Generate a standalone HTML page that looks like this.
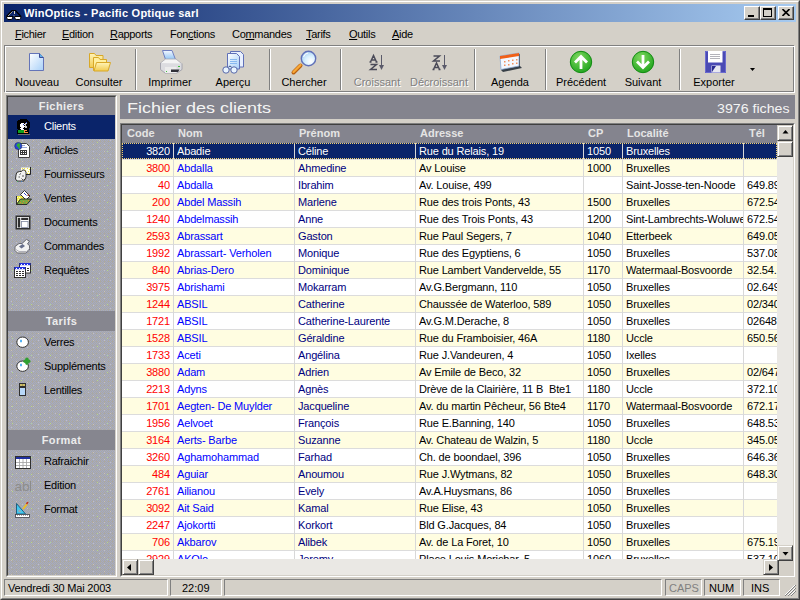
<!DOCTYPE html>
<html><head><meta charset="utf-8">
<style>
*{margin:0;padding:0;box-sizing:border-box}
html,body{width:800px;height:600px;overflow:hidden;background:#D4D0C8;font-family:"Liberation Sans",sans-serif;font-size:11px;color:#000}
.a{position:absolute}
.t{position:absolute;white-space:nowrap;line-height:13px}
/* window frame */
#frame{left:0;top:0;width:800px;height:600px;border-top:1px solid #D4D0C8;border-left:1px solid #D4D0C8;border-right:1px solid #404040;border-bottom:1px solid #404040}
#frame2{left:1px;top:1px;width:798px;height:598px;border-top:1px solid #FFF;border-left:1px solid #FFF;border-right:1px solid #808080;border-bottom:1px solid #808080}
#title{left:4px;top:4px;width:792px;height:18px;background:linear-gradient(to right,#0A246A,#A6CAF0)}
.tbtn{position:absolute;top:6px;width:16px;height:14px;background:#D4D0C8;border-top:1px solid #FFF;border-left:1px solid #FFF;border-right:1px solid #404040;border-bottom:1px solid #404040;box-shadow:inset -1px -1px 0 #808080}
.menu{position:absolute;top:28px;line-height:13px;white-space:nowrap;letter-spacing:-0.3px}
.u{text-decoration:underline}
/* etched */
#tb1{left:4px;top:45px;width:790px;height:47px;border:1px solid #808080}
#tb2{left:5px;top:46px;width:790px;height:47px;border:1px solid #FFF}
.sep{position:absolute;top:49px;width:2px;height:41px;border-left:1px solid #808080;border-right:1px solid #FFF}
.tl{position:absolute;top:76px;line-height:13px;white-space:nowrap;text-align:center;width:80px}
.dis{color:#808080;text-shadow:1px 1px 0 #FFF}
/* sidebar */
#side{left:6px;top:95px;width:111px;height:482px;border-top:1px solid #808080;border-left:1px solid #808080;border-right:1px solid #FFF;border-bottom:1px solid #FFF}
#sidein{left:7px;top:96px;width:109px;height:480px;border-top:1px solid #404040;border-left:1px solid #404040;border-right:1px solid #D4D0C8;border-bottom:1px solid #D4D0C8;background:#A6A9B6}
.sh{position:absolute;left:8px;width:107px;background:#86868F;color:#ECECEC;font-weight:bold;text-align:center;font-size:11px;letter-spacing:0.4px}
.si{position:absolute;left:44px;line-height:13px;white-space:nowrap;letter-spacing:-0.25px}
.ic{position:absolute;left:16px}
/* main header */
#mh{left:120px;top:95px;width:675px;height:24px;background:#84848E}
/* grid */
#g1{left:120px;top:123px;width:675px;height:454px;border-top:1px solid #808080;border-left:1px solid #808080;border-right:1px solid #FFF;border-bottom:1px solid #FFF}
#g2{left:121px;top:124px;width:673px;height:452px;border-top:1px solid #404040;border-left:1px solid #404040;border-right:1px solid #D4D0C8;border-bottom:1px solid #D4D0C8}
#gc{left:122px;top:125px;width:655px;height:434px;overflow:hidden;background:#FFF}
#gh{position:absolute;left:0;top:0;width:655px;height:18px;background:#84848E}
.gh{position:absolute;top:2px;line-height:13px;color:#E4E4E4;font-weight:bold;white-space:nowrap}
.row{position:absolute;left:0;width:655px;height:16px}
.c{position:absolute;top:1px;line-height:14px;white-space:nowrap;overflow:hidden;letter-spacing:-0.15px}
.r{text-align:right}
.vl{position:absolute;top:18px;width:1px;height:420px;background:#D8D8D8}
.hl{position:absolute;left:0;width:655px;height:1px;background:#DCDCDC}
.sb{position:absolute;background:#D4D0C8;border-top:1px solid #D4D0C8;border-left:1px solid #D4D0C8;border-right:1px solid #404040;border-bottom:1px solid #404040;box-shadow:inset 1px 1px 0 #FFF,inset -1px -1px 0 #808080}
.trk{position:absolute;background-color:#EAE8E4}
/* status */
.sp{position:absolute;top:579px;height:17px;border-top:1px solid #808080;border-left:1px solid #808080;border-right:1px solid #FFF;border-bottom:1px solid #FFF}
.st{position:absolute;top:582px;line-height:13px;white-space:nowrap}
</style></head><body>
<div id="frame" class="a"></div>
<div id="frame2" class="a"></div>

<!-- title bar -->
<div id="title" class="a"></div>
<svg class="a" style="left:4px;top:6px" width="20" height="16" viewBox="0 0 20 16">
 <path d="M2.5 10.5 L8 4.5 H11.5 L17 10.5" fill="none" stroke="#000" stroke-width="1.2"/>
 <path d="M4 10 L8.5 5.5" fill="none" stroke="#C8C0A8" stroke-width="0.8"/>
 <path d="M10.5 5 V8 M10 9.5 L10.5 10.5" fill="none" stroke="#E0D8C0" stroke-width="1"/>
 <path d="M2.5 10.5 H9 L8.3 12.8 L7.2 13.5 H4 L2.8 12.5z M10.5 10.5 H17 L16.6 12.5 L15.4 13.5 H12.2 L11 12.8z" fill="#FFF" stroke="#000" stroke-width="1"/>
</svg>
<div class="t" style="left:24px;top:7px;color:#FFF;font-weight:bold;font-size:11px;letter-spacing:0.25px">WinOptics - Pacific Optique sarl</div>
<div class="tbtn" style="left:744px"><div class="a" style="left:3px;top:8px;width:6px;height:2px;background:#000"></div></div>
<div class="tbtn" style="left:760px"><div class="a" style="left:2px;top:1px;width:9px;height:9px;border:1px solid #000;border-top-width:2px"></div></div>
<div class="tbtn" style="left:778px"><svg class="a" style="left:3px;top:2px" width="8" height="7" viewBox="0 0 8 7"><path d="M0.5 0 L7.5 7 M7.5 0 L0.5 7" stroke="#000" stroke-width="1.6"/></svg></div>

<!-- menu -->
<div class="menu" style="left:15px"><span class="u">F</span>ichier</div>
<div class="menu" style="left:62px"><span class="u">E</span>dition</div>
<div class="menu" style="left:110px"><span class="u">R</span>apports</div>
<div class="menu" style="left:170px">Fon<span class="u">c</span>tions</div>
<div class="menu" style="left:232px">Co<span class="u">m</span>mandes</div>
<div class="menu" style="left:306px"><span class="u">T</span>arifs</div>
<div class="menu" style="left:349px"><span class="u">O</span>utils</div>
<div class="menu" style="left:392px"><span class="u">A</span>ide</div>

<!-- toolbar -->
<div id="tb1" class="a"></div>
<div id="tb2" class="a"></div>
<div class="sep" style="left:135px"></div>
<div class="sep" style="left:269px"></div>
<div class="sep" style="left:340px"></div>
<div class="sep" style="left:474px"></div>
<div class="sep" style="left:545px"></div>
<div class="sep" style="left:679px"></div>

<svg class="a" style="left:0;top:0" width="800" height="95" viewBox="0 0 800 95">
 <defs>
  <linearGradient id="pg" x1="0" y1="0" x2="1" y2="1"><stop offset="0" stop-color="#FFFFFF"/><stop offset="1" stop-color="#A8D0F8"/></linearGradient>
  <linearGradient id="fd" x1="0" y1="0" x2="0" y2="1"><stop offset="0" stop-color="#FFF4B8"/><stop offset="1" stop-color="#F2CC50"/></linearGradient>
  <radialGradient id="gr" cx="0.4" cy="0.3" r="0.8"><stop offset="0" stop-color="#80D860"/><stop offset="1" stop-color="#18A018"/></radialGradient>
  <radialGradient id="ln" cx="0.65" cy="0.7" r="0.75"><stop offset="0" stop-color="#FFFFFF"/><stop offset="0.5" stop-color="#D8F0FF"/><stop offset="1" stop-color="#A8D0F0"/></radialGradient>
  <linearGradient id="pp" x1="0" y1="0" x2="0" y2="1"><stop offset="0" stop-color="#F4F8FF"/><stop offset="1" stop-color="#90C4F4"/></linearGradient>
 </defs>
 <!-- Nouveau: page -->
 <path d="M29.5 53.5 H39.5 L43.5 57.5 V70.5 H29.5 Z" fill="url(#pg)" stroke="#6474B8" stroke-width="1"/>
 <path d="M39.5 53.5 V57.5 H43.5" fill="#60B0E8" stroke="#3C4C98" stroke-width="1"/>
 <!-- Consulter: folders -->
 <path d="M89.5 53.5 h5 l1.5 2 h7 v12 h-13.5z" fill="url(#fd)" stroke="#D8A828" stroke-width="1"/>
 <path d="M93.5 57.5 h5 l1.5 2 h6.5 v3 l-9 0 -1 8 h-3z" fill="#FFF0A0" stroke="#D8A828" stroke-width="1"/>
 <path d="M94 71 l2.5 -8.5 h14 l-2.5 8.5z" fill="url(#fd)" stroke="#D8A828" stroke-width="1"/>
 <!-- Imprimer: printer -->
 <path d="M162.5 50.5 h9.5 l3.5 9 h-10z" fill="url(#pp)" stroke="#7080C0" stroke-width="1"/>
 <path d="M160.5 63 l5 -4 h10.5 l5.5 4.5 l-5 3.5 h-11z" fill="#F4F4F4" stroke="#A8A8B0" stroke-width="0.8"/>
 <path d="M160.5 63 v6.5 l4.5 3.5 h12 l5 -3.5 v-6" fill="#DCDCE0" stroke="#9898A4" stroke-width="0.8"/>
 <path d="M165 67 h11.5 v6 h-11.5z" fill="#ECECEC"/>
 <path d="M171 69.5 h8.5 l-1.5 2.5 h-7z" fill="#303038"/>
 <rect x="178" y="66" width="2" height="1" fill="#40C040"/>
 <rect x="166" y="71" width="1" height="1" fill="#40C040"/>
 <!-- Apercu -->
 <path d="M230.5 51.5 h10 l3 3 v12.5 h-13z" fill="#E8F0FF" stroke="#6070B8" stroke-width="1"/>
 <path d="M227.5 53.5 h9 l3 3 v12.5 h-12z" fill="url(#pg)" stroke="#6070B8" stroke-width="1"/>
 <path d="M230 59.5 h7 M230 61.5 h7 M230 63.5 h7" stroke="#88B8F0" stroke-width="1"/>
 <circle cx="226" cy="70" r="3.2" fill="#E8F4FF" stroke="#5868A8" stroke-width="1"/>
 <circle cx="234" cy="70" r="3.2" fill="#E8F4FF" stroke="#5868A8" stroke-width="1"/>
 <path d="M228.5 67 q1.5 -2 3 0" fill="none" stroke="#3A4A80" stroke-width="1"/>
 <!-- Chercher -->
 <path d="M293.5 72.5 L300.5 65.5" stroke="#B86010" stroke-width="4" stroke-linecap="round"/>
 <path d="M293.5 72 L300.5 65" stroke="#F8A838" stroke-width="2.4" stroke-linecap="round"/>
 <circle cx="308.5" cy="58.5" r="7.2" fill="url(#ln)" stroke="#6070B8" stroke-width="1.4"/>
 <path d="M303.5 57 q1 -3.5 4.5 -4" fill="none" stroke="#FFF" stroke-width="1"/>
 <!-- Croissant -->
 <g fill="none" stroke="#4A4A58" stroke-width="1.5">
  <path d="M370.5 62 L373.5 55.5 L376.5 62 M371.5 60 h4 M369.5 62 h2 M375.5 62 h2"/>
  <path d="M370.5 64.5 h6 l-6 5 h6.5"/>
  <path d="M433.5 56 h6 l-6 5 h6.5"/>
  <path d="M433.5 69.5 L436.5 63 L439.5 69.5 M434.5 67.5 h4 M432.5 69.5 h2 M438.5 69.5 h2"/>
 </g>
 <g stroke="#5A5A6A" stroke-width="1"><path d="M381.5 55 v11"/><path d="M444.5 55 v11"/></g>
 <g fill="#5A5A6A"><path d="M379 65 h5 l-2.5 5z"/><path d="M442 65 h5 l-2.5 5z"/></g>
 <!-- Agenda -->
 <path d="M501 57 l19 -3 v12 l2 2 -19 4 -2 -2z" fill="#384048"/>
 <path d="M500 56 l19 -3 v13 l-18 3.5z" fill="#F4F8FF" stroke="#8CA8D0" stroke-width="0.8"/>
 <path d="M500 56 l19 -3 v3 l-19 3z" fill="#F06018"/>
 <g fill="#F09060"><rect x="504" y="61" width="1.5" height="1.5"/><rect x="508" y="60" width="1.5" height="1.5"/><rect x="512" y="59.5" width="1.5" height="1.5"/><rect x="516" y="59" width="1.5" height="1.5"/><rect x="504" y="64.5" width="1.5" height="1.5"/><rect x="508" y="64" width="1.5" height="1.5"/><rect x="512" y="63" width="1.5" height="1.5"/><rect x="516" y="62.5" width="1.5" height="1.5"/></g>
 <!-- Precedent / Suivant -->
 <circle cx="581" cy="62" r="10.7" fill="url(#gr)" stroke="#108A10" stroke-width="1"/>
 <path d="M581 69 V57 M575 62.5 L581 56.5 L587 62.5" fill="none" stroke="#FFF" stroke-width="2.8"/>
 <circle cx="643" cy="62" r="10.7" fill="url(#gr)" stroke="#108A10" stroke-width="1"/>
 <path d="M643 55 V67 M637 61.5 L643 67.5 L649 61.5" fill="none" stroke="#FFF" stroke-width="2.8"/>
 <!-- Exporter floppy -->
 <path d="M705 51 h21 v22 h-21z" fill="#4A4AB4"/>
 <path d="M705.5 51.5 h20 v21 h-20z" fill="none" stroke="#6A6AD0" stroke-width="1"/>
 <rect x="708" y="51" width="14.5" height="11.5" fill="#FFFFFF"/>
 <path d="M710 54.5 h10 M710 56.5 h10 M710 58.5 h10" stroke="#A0A0A8" stroke-width="0.8"/>
 <path d="M711.5 65.5 h9 v7 h-9z" fill="#E8E8F0"/>
 <path d="M712 66 h4 l-4 6z" fill="#2A2A90"/>
</svg>


<div class="tl" style="left:-3px">Nouveau</div>
<div class="tl" style="left:59px">Consulter</div>
<div class="tl" style="left:130px">Imprimer</div>
<div class="tl" style="left:193px">Aperçu</div>
<div class="tl" style="left:264px">Chercher</div>
<div class="tl dis" style="left:337px">Croissant</div>
<div class="tl dis" style="left:399px">Décroissant</div>
<div class="tl" style="left:470px">Agenda</div>
<div class="tl" style="left:541px">Précédent</div>
<div class="tl" style="left:603px">Suivant</div>
<div class="tl" style="left:674px">Exporter</div>
<svg class="a" style="left:750px;top:68px" width="5" height="3"><path d="M0 0h5l-2.5 3z" fill="#000"/></svg>

<!-- sidebar -->
<div id="side" class="a"></div>
<div id="sidein" class="a"></div>
<svg class="a" style="left:8px;top:97px" width="107" height="478">
<defs>
<pattern id="sbp" width="8" height="8" patternUnits="userSpaceOnUse"><rect width="8" height="8" fill="#AAA8A3"/><g fill="#A4AAC4"><rect x="2" y="0" width="1" height="1"/><rect x="6" y="0" width="1" height="1"/><rect x="1" y="1" width="1" height="1"/><rect x="3" y="1" width="1" height="1"/><rect x="5" y="1" width="1" height="1"/><rect x="7" y="1" width="1" height="1"/><rect x="0" y="2" width="1" height="1"/><rect x="2" y="2" width="1" height="1"/><rect x="4" y="2" width="1" height="1"/><rect x="6" y="2" width="1" height="1"/><rect x="1" y="3" width="1" height="1"/><rect x="3" y="3" width="1" height="1"/><rect x="5" y="3" width="1" height="1"/><rect x="7" y="3" width="1" height="1"/><rect x="2" y="4" width="1" height="1"/><rect x="6" y="4" width="1" height="1"/><rect x="1" y="5" width="1" height="1"/><rect x="3" y="5" width="1" height="1"/><rect x="5" y="5" width="1" height="1"/><rect x="7" y="5" width="1" height="1"/><rect x="0" y="6" width="1" height="1"/><rect x="2" y="6" width="1" height="1"/><rect x="4" y="6" width="1" height="1"/><rect x="6" y="6" width="1" height="1"/><rect x="1" y="7" width="1" height="1"/><rect x="3" y="7" width="1" height="1"/><rect x="5" y="7" width="1" height="1"/><rect x="7" y="7" width="1" height="1"/></g></pattern>
<pattern id="sbw" width="11" height="7" patternUnits="userSpaceOnUse"><rect x="3" y="1" width="1" height="1" fill="#C6C0C0"/><rect x="8" y="5" width="1" height="1" fill="#C6C0C0"/></pattern>
<pattern id="sbg" width="19" height="17" patternUnits="userSpaceOnUse"><rect x="4" y="3" width="1" height="1" fill="#B4D890"/><rect x="13" y="11" width="1" height="1" fill="#B4D890"/></pattern>
</defs>
<rect width="107" height="478" fill="url(#sbp)"/>
<rect width="107" height="478" fill="url(#sbw)"/>
<rect width="107" height="478" fill="url(#sbg)"/>
</svg>
<div class="sh" style="top:97px;height:18px;line-height:18px">Fichiers</div>
<div class="a" style="left:8px;top:115px;width:107px;height:24px;background:#0A246A"></div>
<div class="si" style="top:120px;color:#FFF">Clients</div>
<div class="si" style="top:144px">Articles</div>
<div class="si" style="top:168px">Fournisseurs</div>
<div class="si" style="top:192px">Ventes</div>
<div class="si" style="top:216px">Documents</div>
<div class="si" style="top:240px">Commandes</div>
<div class="si" style="top:264px">Requêtes</div>
<div class="sh" style="top:311px;height:20px;line-height:20px">Tarifs</div>
<div class="si" style="top:336px">Verres</div>
<div class="si" style="top:360px">Suppléments</div>
<div class="si" style="top:384px">Lentilles</div>
<div class="sh" style="top:430px;height:20px;line-height:20px">Format</div>
<div class="si" style="top:455px">Rafraichir</div>
<div class="si" style="top:479px">Edition</div>
<div class="si" style="top:503px">Format</div>

<svg class="a" style="left:0;top:0" width="120" height="530" viewBox="0 0 120 530">
 <!-- Clients -->
 <rect x="18" y="134" width="12" height="1" fill="#6A6A70"/>
 <g fill="#000"><rect x="20" y="119" width="7" height="1"/><rect x="18" y="120" width="10" height="1"/><rect x="17" y="121" width="12" height="1"/><rect x="17" y="122" width="13" height="1"/><rect x="17" y="123" width="13" height="1"/><rect x="17" y="124" width="13" height="1"/><rect x="17" y="125" width="13" height="1"/><rect x="17" y="126" width="13" height="1"/><rect x="17" y="127" width="13" height="1"/><rect x="17" y="128" width="12" height="1"/><rect x="18" y="129" width="11" height="1"/><rect x="17" y="130" width="12" height="1"/><rect x="17" y="131" width="12" height="1"/><rect x="17" y="132" width="12" height="1"/><rect x="17" y="133" width="12" height="1"/></g>
 <g fill="#FFF"><rect x="21" y="123" width="3" height="1"/><rect x="20" y="124" width="5" height="1"/><rect x="20" y="125" width="4" height="1"/><rect x="20" y="126" width="5" height="1"/><rect x="21" y="127" width="3" height="1"/><rect x="20" y="128" width="3" height="1"/><rect x="21" y="129" width="3" height="1"/></g>
 <rect x="25" y="123" width="2" height="5" fill="#C8C8C8"/>
 <rect x="26" y="124" width="1" height="2" fill="#000"/>
 <rect x="23" y="124" width="1" height="1" fill="#2040D0"/>
 <rect x="26" y="122" width="1" height="1" fill="#3050E0"/>
 <rect x="18" y="130" width="6" height="3" fill="#10A020"/>
 <path d="M24 130 h3 v1 h-2 v1 h3 v1 h-4z" fill="#FF9040"/>
 <!-- Articles -->
 <path d="M18.5 143.5 h8 l3 3 v11 h-11z" fill="#FFF" stroke="#404040" stroke-width="1"/>
 <path d="M21 145.5 h4 M21 147.5 h6" stroke="#8090D0" stroke-width="0.8"/>
 <rect x="20" y="150" width="7" height="5" fill="#383838"/>
 <g fill="#FFF"><rect x="21" y="151" width="1" height="1"/><rect x="23" y="151" width="1" height="1"/><rect x="25" y="151" width="1" height="1"/><rect x="21" y="153" width="1" height="1"/><rect x="23" y="153" width="1" height="1"/><rect x="25" y="153" width="1" height="1"/></g>
 <circle cx="18.3" cy="146" r="3.6" fill="#2840E0" stroke="#203060" stroke-width="0.6"/>
 <path d="M17 144 l2 -1 1.5 1.5 -1 2 1 1.5 -1.5 1 -1 -2 -1.5 -1z" fill="#30B030"/>
 <!-- Fournisseurs -->
 <path d="M21 167.5 h9.5 v6.5 h-9.5z" fill="#FFFFE8"/>
 <path d="M30.5 167 v7.5 h-8" fill="none" stroke="#202028" stroke-width="1"/>
 <g fill="#F0E040"><rect x="22" y="168" width="1" height="1"/><rect x="24" y="168" width="1" height="1"/><rect x="27" y="168" width="1" height="1"/><rect x="29" y="169" width="1" height="1"/><rect x="25" y="170" width="1" height="1"/><rect x="28" y="171" width="1" height="1"/><rect x="29" y="173" width="1" height="1"/><rect x="27" y="173" width="1" height="1"/></g>
 <path d="M16 175 q0 -3.5 3.5 -3.5 h2 l1 -1.5 h2 l1.5 2 v5 l-1 2.5 h-1 v1.5 h-7 l-1.5 -2z" fill="#F0F0F0" stroke="#202020" stroke-width="0.9"/>
 <path d="M19.5 174.5 l1.5 -1 M18.5 177 h1.5 M21.5 178.5 l1.5 1.5 M23 175 v2" stroke="#303030" stroke-width="0.8"/>
 <rect x="17" y="181" width="1" height="1" fill="#40A060"/><rect x="21" y="181" width="1" height="1" fill="#4080C0"/>
 <!-- Ventes -->
 <path d="M16.5 196 h8 l2.5 3 h-6 l-4.5 5.5z" fill="#F4F048"/>
 <g fill="#FFFFC8"><rect x="17" y="197" width="1" height="1"/><rect x="19" y="197" width="1" height="1"/><rect x="18" y="199" width="1" height="1"/><rect x="20" y="198" width="1" height="1"/><rect x="17" y="201" width="1" height="1"/></g>
 <path d="M20.5 194.5 l4 -4 l5.5 5.5 l-4 4z" fill="#FFF" stroke="#202020" stroke-width="0.9"/>
 <path d="M24 193 l2.5 2.5" stroke="#3040C0" stroke-width="1"/>
 <rect x="27.5" y="194.5" width="1.5" height="1.5" fill="#A04030"/>
 <path d="M16.5 204.5 h10.5 l4.5 -5.5 h-11 l-4 5.5z" fill="#78A840" stroke="#202020" stroke-width="0.9"/>
 <g fill="#E08030"><rect x="20" y="202" width="1" height="1"/><rect x="23" y="201" width="1" height="1"/><rect x="26" y="202" width="1" height="1"/><rect x="22" y="203" width="1" height="1"/><rect x="28" y="200" width="1" height="1"/></g>
 <path d="M16.5 196 v8.5" stroke="#303030" stroke-width="1"/>
 <!-- Documents -->
 <path d="M16.3 216.3 h13.4 v12.4 h-13.4z" fill="#FFF" stroke="#303030" stroke-width="1.6"/>
 <rect x="17.8" y="217.8" width="2.4" height="9.7" fill="#303030"/>
 <rect x="21.2" y="217.8" width="7" height="2.2" fill="#303030"/>
 <rect x="21.5" y="221.5" width="6.5" height="6" fill="#FFF" stroke="#8088A0" stroke-width="0.8"/>
 <!-- Commandes -->
 <path d="M15 246.5 l4 -3 h3 l4.5 -4 l3 1.5 l-2 3 l2 1.5 v4.5 l-3.5 3 h-8.5 l-2.5 -2.5z" fill="#F2F2F2" stroke="#606068" stroke-width="0.9"/>
 <path d="M16 249.5 l3 2 h7.5 l3 -3" fill="none" stroke="#A0A0A8" stroke-width="0.8"/>
 <path d="M19 246.5 l3.5 -2.5 l2.5 2 l-3.5 2.5z" fill="#68708C"/>
 <path d="M22 243 l4.5 -3.5" stroke="#909098" stroke-width="0.8"/>
 <!-- Requetes -->
 <rect x="19.5" y="263.5" width="11" height="9.5" fill="#FFF" stroke="#303030" stroke-width="1"/>
 <rect x="19.5" y="263" width="11" height="2.2" fill="#2030E0"/><g fill="#FFF"><rect x="21" y="264" width="1" height="1"/><rect x="24" y="264" width="1" height="1"/><rect x="27" y="264" width="1" height="1"/></g><g fill="#303030"><rect x="27" y="268" width="2" height="1"/><rect x="27" y="270" width="2" height="1"/></g>
 <rect x="14.5" y="267.5" width="11" height="10" fill="#FFF" stroke="#303030" stroke-width="1"/>
 <rect x="14.5" y="267" width="11" height="2.2" fill="#2030E0"/><g fill="#FFF"><rect x="16" y="268" width="1" height="1"/><rect x="19" y="268" width="1" height="1"/><rect x="22" y="268" width="1" height="1"/></g>
 <g fill="#303030"><rect x="16" y="271" width="2" height="1"/><rect x="19" y="271" width="2" height="1"/><rect x="22" y="271" width="2" height="1"/><rect x="16" y="273" width="2" height="1"/><rect x="19" y="273" width="2" height="1"/><rect x="22" y="273" width="2" height="1"/><rect x="16" y="275" width="2" height="1"/><rect x="19" y="275" width="2" height="1"/><rect x="22" y="275" width="2" height="1"/></g>
 <!-- Verres -->
 <ellipse cx="22.6" cy="342.2" rx="5.8" ry="5.2" fill="#FFF" stroke="#303030" stroke-width="1"/>
 <path d="M20 340 l2 2 M22 340 l-2 2 M21 339.5 v3" stroke="#40A8F0" stroke-width="0.8"/>
 <!-- Supplements -->
 <ellipse cx="22.6" cy="366.2" rx="5.8" ry="5.2" fill="#FFF" stroke="#303030" stroke-width="1"/>
 <path d="M20 364 l2 2 M22 364 l-2 2 M21 363.5 v3" stroke="#40A8F0" stroke-width="0.8"/>
 <g fill="#30A030"><circle cx="26.9" cy="359.4" r="1.8"/><circle cx="26.9" cy="363.1" r="1.8"/><circle cx="25.1" cy="361.25" r="1.8"/><circle cx="28.7" cy="361.25" r="1.8"/></g>
 <!-- Lentilles -->
 <rect x="19.5" y="387.5" width="6" height="8" fill="#B8D8F8" stroke="#303030" stroke-width="1"/>
 <rect x="19.5" y="383.5" width="6" height="3" fill="#F0E080" stroke="#303030" stroke-width="1"/><path d="M21 384 v2 M22.5 384 v2 M24 384 v2" stroke="#807030" stroke-width="0.6"/>
 <!-- Rafraichir -->
 <rect x="15.5" y="456.5" width="15" height="12" fill="#FFF" stroke="#303030" stroke-width="1"/>
 <rect x="16" y="457" width="14" height="2" fill="#2030A0"/>
 <path d="M16 462.5 h14 M16 465.5 h14 M19.5 459 v9 M23 459 v9 M26.5 459 v9" stroke="#A0A0A0" stroke-width="0.8"/>
 <!-- Edition ab| -->
 <text x="14.5" y="491" font-family="Liberation Sans" font-size="13.5" fill="#8C8C8C">ab</text>
 <path d="M30.5 481 v10.5" stroke="#8C8C8C" stroke-width="1"/>
 <!-- Format -->
 <path d="M16.5 503.5 v10.5 h9z" fill="#40C8F0" stroke="#206080" stroke-width="1"/>
 <path d="M18.5 509 v3 h3z" fill="#A0A8B0"/>
 <rect x="15.5" y="514.5" width="14" height="3" fill="#FFF" stroke="#404048" stroke-width="0.8"/><path d="M17.5 515 v1 M19.5 515 v1 M21.5 515 v1 M23.5 515 v1 M25.5 515 v1 M27.5 515 v1" stroke="#606070" stroke-width="0.6"/>
 <path d="M23 509 l4 -5" stroke="#F0C020" stroke-width="1.8"/>
 <path d="M26.5 504 l1.5 -2" stroke="#C03020" stroke-width="1.5"/>
</svg>


<!-- main header -->
<div id="mh" class="a"></div>
<div class="t" style="left:127px;top:99px;font-size:15px;line-height:17px;color:#F4F4F4;transform:scaleX(1.2);transform-origin:0 0">Fichier des clients</div>
<div class="t" style="left:717px;top:101px;font-size:13px;line-height:15px;color:#F4F4F4;transform:scaleX(1.09);transform-origin:0 0">3976 fiches</div>

<!-- grid -->
<div id="g1" class="a"></div>
<div id="g2" class="a"></div>
<div id="gc" class="a">
 <div id="gh">
  <div class="gh" style="left:5px">Code</div>
  <div class="gh" style="left:56px">Nom</div>
  <div class="gh" style="left:177px">Prénom</div>
  <div class="gh" style="left:298px">Adresse</div>
  <div class="gh" style="left:466px">CP</div>
  <div class="gh" style="left:505px">Localité</div>
  <div class="gh" style="left:627px">Tél</div>
 </div>
<div class="hl" style="top:34px"></div>
<div class="hl" style="top:51px"></div>
<div class="hl" style="top:68px"></div>
<div class="hl" style="top:85px"></div>
<div class="hl" style="top:102px"></div>
<div class="hl" style="top:119px"></div>
<div class="hl" style="top:136px"></div>
<div class="hl" style="top:153px"></div>
<div class="hl" style="top:170px"></div>
<div class="hl" style="top:187px"></div>
<div class="hl" style="top:204px"></div>
<div class="hl" style="top:221px"></div>
<div class="hl" style="top:238px"></div>
<div class="hl" style="top:255px"></div>
<div class="hl" style="top:272px"></div>
<div class="hl" style="top:289px"></div>
<div class="hl" style="top:306px"></div>
<div class="hl" style="top:323px"></div>
<div class="hl" style="top:340px"></div>
<div class="hl" style="top:357px"></div>
<div class="hl" style="top:374px"></div>
<div class="hl" style="top:391px"></div>
<div class="hl" style="top:408px"></div>
<div class="hl" style="top:425px"></div>
<div class="row" style="top:18px;background:#0A246A">
<span class="c r" style="left:0px;width:48px;color:#FFFFFF">3820</span>
<span class="c" style="left:55px;width:117px;color:#FFFFFF">Abadie</span>
<span class="c" style="left:176px;width:117px;color:#FFFFFF">Céline</span>
<span class="c" style="left:297px;width:164px;color:#FFFFFF">Rue du Relais, 19</span>
<span class="c" style="left:465px;width:35px;color:#FFFFFF">1050</span>
<span class="c" style="left:504px;width:117px;color:#FFFFFF">Bruxelles</span>
</div>
<div class="row" style="top:35px;background:#FFFDE1">
<span class="c r" style="left:0px;width:48px;color:#FF0000">3800</span>
<span class="c" style="left:55px;width:117px;color:#0000FF">Abdalla</span>
<span class="c" style="left:176px;width:117px;color:#000080">Ahmedine</span>
<span class="c" style="left:297px;width:164px;color:#000000">Av Louise</span>
<span class="c" style="left:465px;width:35px;color:#000000">1000</span>
<span class="c" style="left:504px;width:117px;color:#000000">Bruxelles</span>
</div>
<div class="row" style="top:52px;background:#FFFFFF">
<span class="c r" style="left:0px;width:48px;color:#FF0000">40</span>
<span class="c" style="left:55px;width:117px;color:#0000FF">Abdalla</span>
<span class="c" style="left:176px;width:117px;color:#000080">Ibrahim</span>
<span class="c" style="left:297px;width:164px;color:#000000">Av. Louise, 499</span>
<span class="c" style="left:504px;width:117px;color:#000000">Saint-Josse-ten-Noode</span>
<span class="c" style="left:625px;width:31px;color:#000000">649.89.33</span>
</div>
<div class="row" style="top:69px;background:#FFFDE1">
<span class="c r" style="left:0px;width:48px;color:#FF0000">200</span>
<span class="c" style="left:55px;width:117px;color:#0000FF">Abdel Massih</span>
<span class="c" style="left:176px;width:117px;color:#000080">Marlene</span>
<span class="c" style="left:297px;width:164px;color:#000000">Rue des trois Ponts, 43</span>
<span class="c" style="left:465px;width:35px;color:#000000">1500</span>
<span class="c" style="left:504px;width:117px;color:#000000">Bruxelles</span>
<span class="c" style="left:625px;width:31px;color:#000000">672.54.71</span>
</div>
<div class="row" style="top:86px;background:#FFFFFF">
<span class="c r" style="left:0px;width:48px;color:#FF0000">1240</span>
<span class="c" style="left:55px;width:117px;color:#0000FF">Abdelmassih</span>
<span class="c" style="left:176px;width:117px;color:#000080">Anne</span>
<span class="c" style="left:297px;width:164px;color:#000000">Rue des Trois Ponts, 43</span>
<span class="c" style="left:465px;width:35px;color:#000000">1200</span>
<span class="c" style="left:504px;width:117px;color:#000000">Sint-Lambrechts-Woluwe</span>
<span class="c" style="left:625px;width:31px;color:#000000">672.54.71</span>
</div>
<div class="row" style="top:103px;background:#FFFDE1">
<span class="c r" style="left:0px;width:48px;color:#FF0000">2593</span>
<span class="c" style="left:55px;width:117px;color:#0000FF">Abrassart</span>
<span class="c" style="left:176px;width:117px;color:#000080">Gaston</span>
<span class="c" style="left:297px;width:164px;color:#000000">Rue Paul Segers, 7</span>
<span class="c" style="left:465px;width:35px;color:#000000">1040</span>
<span class="c" style="left:504px;width:117px;color:#000000">Etterbeek</span>
<span class="c" style="left:625px;width:31px;color:#000000">649.05.21</span>
</div>
<div class="row" style="top:120px;background:#FFFFFF">
<span class="c r" style="left:0px;width:48px;color:#FF0000">1992</span>
<span class="c" style="left:55px;width:117px;color:#0000FF">Abrassart- Verholen</span>
<span class="c" style="left:176px;width:117px;color:#000080">Monique</span>
<span class="c" style="left:297px;width:164px;color:#000000">Rue des Egyptiens, 6</span>
<span class="c" style="left:465px;width:35px;color:#000000">1050</span>
<span class="c" style="left:504px;width:117px;color:#000000">Bruxelles</span>
<span class="c" style="left:625px;width:31px;color:#000000">537.08.12</span>
</div>
<div class="row" style="top:137px;background:#FFFDE1">
<span class="c r" style="left:0px;width:48px;color:#FF0000">840</span>
<span class="c" style="left:55px;width:117px;color:#0000FF">Abrias-Dero</span>
<span class="c" style="left:176px;width:117px;color:#000080">Dominique</span>
<span class="c" style="left:297px;width:164px;color:#000000">Rue Lambert Vandervelde, 55</span>
<span class="c" style="left:465px;width:35px;color:#000000">1170</span>
<span class="c" style="left:504px;width:117px;color:#000000">Watermaal-Bosvoorde</span>
<span class="c" style="left:625px;width:31px;color:#000000">32.54.12</span>
</div>
<div class="row" style="top:154px;background:#FFFFFF">
<span class="c r" style="left:0px;width:48px;color:#FF0000">3975</span>
<span class="c" style="left:55px;width:117px;color:#0000FF">Abrishami</span>
<span class="c" style="left:176px;width:117px;color:#000080">Mokarram</span>
<span class="c" style="left:297px;width:164px;color:#000000">Av.G.Bergmann, 110</span>
<span class="c" style="left:465px;width:35px;color:#000000">1050</span>
<span class="c" style="left:504px;width:117px;color:#000000">Bruxelles</span>
<span class="c" style="left:625px;width:31px;color:#000000">02.649.55</span>
</div>
<div class="row" style="top:171px;background:#FFFDE1">
<span class="c r" style="left:0px;width:48px;color:#FF0000">1244</span>
<span class="c" style="left:55px;width:117px;color:#0000FF">ABSIL</span>
<span class="c" style="left:176px;width:117px;color:#000080">Catherine</span>
<span class="c" style="left:297px;width:164px;color:#000000">Chaussée de Waterloo, 589</span>
<span class="c" style="left:465px;width:35px;color:#000000">1050</span>
<span class="c" style="left:504px;width:117px;color:#000000">Bruxelles</span>
<span class="c" style="left:625px;width:31px;color:#000000">02/340.11</span>
</div>
<div class="row" style="top:188px;background:#FFFFFF">
<span class="c r" style="left:0px;width:48px;color:#FF0000">1721</span>
<span class="c" style="left:55px;width:117px;color:#0000FF">ABSIL</span>
<span class="c" style="left:176px;width:117px;color:#000080">Catherine-Laurente</span>
<span class="c" style="left:297px;width:164px;color:#000000">Av.G.M.Derache, 8</span>
<span class="c" style="left:465px;width:35px;color:#000000">1050</span>
<span class="c" style="left:504px;width:117px;color:#000000">Bruxelles</span>
<span class="c" style="left:625px;width:31px;color:#000000">02648.10</span>
</div>
<div class="row" style="top:205px;background:#FFFDE1">
<span class="c r" style="left:0px;width:48px;color:#FF0000">1528</span>
<span class="c" style="left:55px;width:117px;color:#0000FF">ABSIL</span>
<span class="c" style="left:176px;width:117px;color:#000080">Géraldine</span>
<span class="c" style="left:297px;width:164px;color:#000000">Rue du Framboisier, 46A</span>
<span class="c" style="left:465px;width:35px;color:#000000">1180</span>
<span class="c" style="left:504px;width:117px;color:#000000">Uccle</span>
<span class="c" style="left:625px;width:31px;color:#000000">650.56.22</span>
</div>
<div class="row" style="top:222px;background:#FFFFFF">
<span class="c r" style="left:0px;width:48px;color:#FF0000">1733</span>
<span class="c" style="left:55px;width:117px;color:#0000FF">Aceti</span>
<span class="c" style="left:176px;width:117px;color:#000080">Angélina</span>
<span class="c" style="left:297px;width:164px;color:#000000">Rue J.Vandeuren, 4</span>
<span class="c" style="left:465px;width:35px;color:#000000">1050</span>
<span class="c" style="left:504px;width:117px;color:#000000">Ixelles</span>
</div>
<div class="row" style="top:239px;background:#FFFDE1">
<span class="c r" style="left:0px;width:48px;color:#FF0000">3880</span>
<span class="c" style="left:55px;width:117px;color:#0000FF">Adam</span>
<span class="c" style="left:176px;width:117px;color:#000080">Adrien</span>
<span class="c" style="left:297px;width:164px;color:#000000">Av Emile de Beco, 32</span>
<span class="c" style="left:465px;width:35px;color:#000000">1050</span>
<span class="c" style="left:504px;width:117px;color:#000000">Bruxelles</span>
<span class="c" style="left:625px;width:31px;color:#000000">02/647.11</span>
</div>
<div class="row" style="top:256px;background:#FFFFFF">
<span class="c r" style="left:0px;width:48px;color:#FF0000">2213</span>
<span class="c" style="left:55px;width:117px;color:#0000FF">Adyns</span>
<span class="c" style="left:176px;width:117px;color:#000080">Agnès</span>
<span class="c" style="left:297px;width:164px;color:#000000">Drève de la Clairière, 11 B&nbsp; Bte1</span>
<span class="c" style="left:465px;width:35px;color:#000000">1180</span>
<span class="c" style="left:504px;width:117px;color:#000000">Uccle</span>
<span class="c" style="left:625px;width:31px;color:#000000">372.10.44</span>
</div>
<div class="row" style="top:273px;background:#FFFDE1">
<span class="c r" style="left:0px;width:48px;color:#FF0000">1701</span>
<span class="c" style="left:55px;width:117px;color:#0000FF">Aegten- De Muylder</span>
<span class="c" style="left:176px;width:117px;color:#000080">Jacqueline</span>
<span class="c" style="left:297px;width:164px;color:#000000">Av. du martin Pêcheur, 56 Bte4</span>
<span class="c" style="left:465px;width:35px;color:#000000">1170</span>
<span class="c" style="left:504px;width:117px;color:#000000">Watermaal-Bosvoorde</span>
<span class="c" style="left:625px;width:31px;color:#000000">672.17.31</span>
</div>
<div class="row" style="top:290px;background:#FFFFFF">
<span class="c r" style="left:0px;width:48px;color:#FF0000">1956</span>
<span class="c" style="left:55px;width:117px;color:#0000FF">Aelvoet</span>
<span class="c" style="left:176px;width:117px;color:#000080">François</span>
<span class="c" style="left:297px;width:164px;color:#000000">Rue E.Banning, 140</span>
<span class="c" style="left:465px;width:35px;color:#000000">1050</span>
<span class="c" style="left:504px;width:117px;color:#000000">Bruxelles</span>
<span class="c" style="left:625px;width:31px;color:#000000">648.53.20</span>
</div>
<div class="row" style="top:307px;background:#FFFDE1">
<span class="c r" style="left:0px;width:48px;color:#FF0000">3164</span>
<span class="c" style="left:55px;width:117px;color:#0000FF">Aerts- Barbe</span>
<span class="c" style="left:176px;width:117px;color:#000080">Suzanne</span>
<span class="c" style="left:297px;width:164px;color:#000000">Av. Chateau de Walzin, 5</span>
<span class="c" style="left:465px;width:35px;color:#000000">1180</span>
<span class="c" style="left:504px;width:117px;color:#000000">Uccle</span>
<span class="c" style="left:625px;width:31px;color:#000000">345.05.64</span>
</div>
<div class="row" style="top:324px;background:#FFFFFF">
<span class="c r" style="left:0px;width:48px;color:#FF0000">3260</span>
<span class="c" style="left:55px;width:117px;color:#0000FF">Aghamohammad</span>
<span class="c" style="left:176px;width:117px;color:#000080">Farhad</span>
<span class="c" style="left:297px;width:164px;color:#000000">Ch. de boondael, 396</span>
<span class="c" style="left:465px;width:35px;color:#000000">1050</span>
<span class="c" style="left:504px;width:117px;color:#000000">Bruxelles</span>
<span class="c" style="left:625px;width:31px;color:#000000">646.36.57</span>
</div>
<div class="row" style="top:341px;background:#FFFDE1">
<span class="c r" style="left:0px;width:48px;color:#FF0000">484</span>
<span class="c" style="left:55px;width:117px;color:#0000FF">Aguiar</span>
<span class="c" style="left:176px;width:117px;color:#000080">Anoumou</span>
<span class="c" style="left:297px;width:164px;color:#000000">Rue J.Wytmans, 82</span>
<span class="c" style="left:465px;width:35px;color:#000000">1050</span>
<span class="c" style="left:504px;width:117px;color:#000000">Bruxelles</span>
<span class="c" style="left:625px;width:31px;color:#000000">648.30.89</span>
</div>
<div class="row" style="top:358px;background:#FFFFFF">
<span class="c r" style="left:0px;width:48px;color:#FF0000">2761</span>
<span class="c" style="left:55px;width:117px;color:#0000FF">Ailianou</span>
<span class="c" style="left:176px;width:117px;color:#000080">Evely</span>
<span class="c" style="left:297px;width:164px;color:#000000">Av.A.Huysmans, 86</span>
<span class="c" style="left:465px;width:35px;color:#000000">1050</span>
<span class="c" style="left:504px;width:117px;color:#000000">Bruxelles</span>
</div>
<div class="row" style="top:375px;background:#FFFDE1">
<span class="c r" style="left:0px;width:48px;color:#FF0000">3092</span>
<span class="c" style="left:55px;width:117px;color:#0000FF">Ait Said</span>
<span class="c" style="left:176px;width:117px;color:#000080">Kamal</span>
<span class="c" style="left:297px;width:164px;color:#000000">Rue Elise, 43</span>
<span class="c" style="left:465px;width:35px;color:#000000">1050</span>
<span class="c" style="left:504px;width:117px;color:#000000">Bruxelles</span>
</div>
<div class="row" style="top:392px;background:#FFFFFF">
<span class="c r" style="left:0px;width:48px;color:#FF0000">2247</span>
<span class="c" style="left:55px;width:117px;color:#0000FF">Ajokortti</span>
<span class="c" style="left:176px;width:117px;color:#000080">Korkort</span>
<span class="c" style="left:297px;width:164px;color:#000000">Bld G.Jacques, 84</span>
<span class="c" style="left:465px;width:35px;color:#000000">1050</span>
<span class="c" style="left:504px;width:117px;color:#000000">Bruxelles</span>
</div>
<div class="row" style="top:409px;background:#FFFDE1">
<span class="c r" style="left:0px;width:48px;color:#FF0000">706</span>
<span class="c" style="left:55px;width:117px;color:#0000FF">Akbarov</span>
<span class="c" style="left:176px;width:117px;color:#000080">Alibek</span>
<span class="c" style="left:297px;width:164px;color:#000000">Av. de La Foret, 10</span>
<span class="c" style="left:465px;width:35px;color:#000000">1050</span>
<span class="c" style="left:504px;width:117px;color:#000000">Bruxelles</span>
<span class="c" style="left:625px;width:31px;color:#000000">675.19.02</span>
</div>
<div class="row" style="top:426px;background:#FFFFFF">
<span class="c r" style="left:0px;width:48px;color:#FF0000">2929</span>
<span class="c" style="left:55px;width:117px;color:#0000FF">AKOlo</span>
<span class="c" style="left:176px;width:117px;color:#000080">Jeremy</span>
<span class="c" style="left:297px;width:164px;color:#000000">Place Louis Morichar, 5</span>
<span class="c" style="left:465px;width:35px;color:#000000">1060</span>
<span class="c" style="left:504px;width:117px;color:#000000">Bruxelles</span>
<span class="c" style="left:625px;width:31px;color:#000000">537.10.66</span>
</div>
<div class="vl" style="left:51px"></div>
<div class="vl" style="left:172px"></div>
<div class="vl" style="left:293px"></div>
<div class="vl" style="left:461px"></div>
<div class="vl" style="left:500px"></div>
<div class="vl" style="left:621px"></div>
 <div class="a" style="left:0;top:18px;width:655px;height:16px;border:1px dotted #F0D070"></div>
</div>
<!-- vertical scrollbar -->
<div class="a" style="left:777px;top:559px;width:17px;height:17px;background:#D4D0C8"></div>
<div class="trk" style="left:777px;top:125px;width:16px;height:435px"></div>
<div class="sb" style="left:777px;top:125px;width:16px;height:16px"><svg class="a" style="left:4px;top:4px" width="7" height="4"><path d="M3.5 0L6.5 3.5H0.5z" fill="#000"/></svg></div>
<div class="sb" style="left:777px;top:141px;width:16px;height:16px"></div>
<!-- horizontal scrollbar -->
<div class="trk" style="left:122px;top:559px;width:655px;height:16px"></div>
<div class="sb" style="left:122px;top:559px;width:16px;height:16px"><svg class="a" style="left:4px;top:4px" width="4" height="7"><path d="M4 0v7L0 3.5z" fill="#000"/></svg></div>
<div class="sb" style="left:138px;top:559px;width:16px;height:16px"></div>
<div class="sb" style="left:763px;top:559px;width:16px;height:16px"><svg class="a" style="left:5px;top:4px" width="4" height="7"><path d="M0 0v7l4-3.5z" fill="#000"/></svg></div>
<div class="sb" style="left:777px;top:545px;width:16px;height:16px"><svg class="a" style="left:4px;top:6px" width="7" height="4"><path d="M0.5 0h6L3.5 3.5z" fill="#000"/></svg></div>

<!-- status bar -->
<div class="sp" style="left:4px;width:164px"></div>
<div class="sp" style="left:170px;width:52px"></div>
<div class="sp" style="left:224px;width:438px"></div>
<div class="sp" style="left:665px;width:37px"></div>
<div class="sp" style="left:704px;width:37px"></div>
<div class="sp" style="left:743px;width:37px"></div>
<div class="st" style="left:8px;letter-spacing:-0.2px">Vendredi 30 Mai 2003</div>
<div class="st" style="left:182px">22:09</div>
<div class="st" style="left:669px;color:#808080">CAPS</div>
<div class="st" style="left:709px">NUM</div>
<div class="st" style="left:751px">INS</div>
<svg class="a" style="left:784px;top:584px" width="12" height="12" viewBox="0 0 12 12">
 <path d="M11 1L1 11M11 4L4 11M11 7L7 11" stroke="#FFF" stroke-width="1"/>
 <path d="M12 1L1 12M12 4L4 12M12 7L7 12" stroke="#808080" stroke-width="1"/>
</svg>
</body></html>
